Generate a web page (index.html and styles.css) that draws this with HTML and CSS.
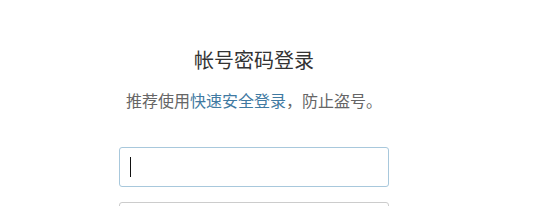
FILE: index.html
```html
<!DOCTYPE html>
<html lang="zh-CN">
  <head>
    <meta charset="UTF-8" />
    <meta name="viewport" content="width=device-width, initial-scale=1.0" />
    <title>帐号密码登录</title>
    <link rel="stylesheet" href="styles.css">
  </head>
  <body>
    <div class="login-box">
      <h1 class="login-title">帐号密码登录</h1>
      <p class="login-tip">
        推荐使用<a href="#" class="quick-link">快速安全登录</a>，防止盗号。
      </p>

      <div class="field focused">
        <input type="text" class="field-input" />
        <span class="caret"></span>
      </div>
      <div class="field">
        <input type="password" class="field-input" />
      </div>
    </div>
  </body>
</html>
```

FILE: styles.css
```css
body {
  margin: 0;
  background-color: #fff;
  font-family: "Noto Sans CJK SC", "Noto Sans", sans-serif;
  color: #333;
}

.login-box {
  width: 270px;
  margin-left: 119px;
  padding-top: 48px;
}

.login-title {
  margin: 0;
  font-size: 20px;
  font-weight: normal;
  line-height: 24px;
  text-align: center;
  color: #333;
}

.login-tip {
  margin: 18px 0 0;
  font-size: 16px;
  line-height: 20px;
  text-align: center;
  color: #666;
}

.quick-link {
  color: #3f7aa2;
  text-decoration: none;
}

.field {
  position: relative;
  margin-top: 37px;
}

.field + .field {
  margin-top: 15px;
}

.field-input {
  display: block;
  box-sizing: border-box;
  width: 270px;
  height: 40px;
  padding: 0 10px;
  border: 1px solid #ccc;
  border-radius: 3px;
  outline: none;
  font-size: 16px;
  caret-color: transparent;
}

.focused .field-input {
  border-color: #a8c8dc;
}

.caret {
  position: absolute;
  left: 11px;
  top: 10px;
  width: 1px;
  height: 20px;
  background-color: #111;
}
```
